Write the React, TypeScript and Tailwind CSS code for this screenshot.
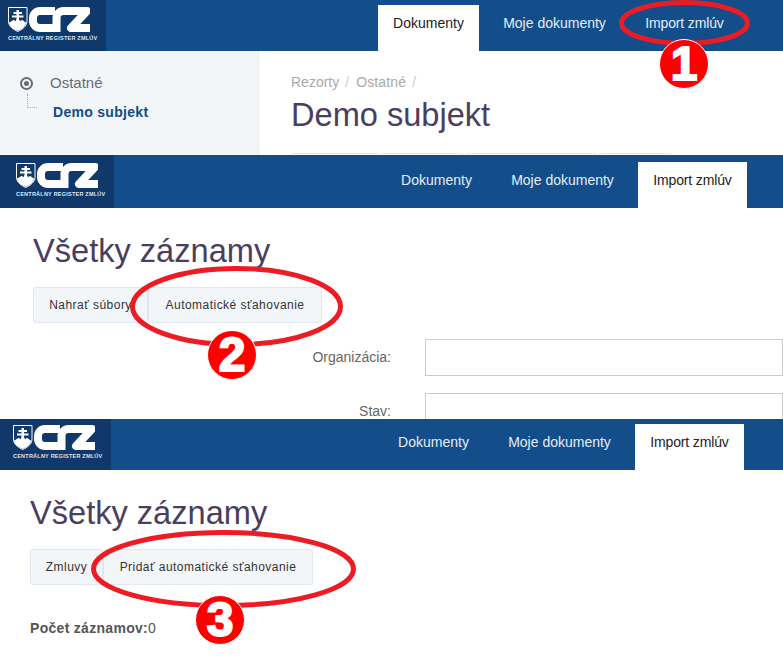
import type { ReactNode } from "react";

const sans = "font-['Liberation_Sans',Arial,sans-serif]";

// CRZ mark: state shield plus the stylised letters
function Logo() {
  return (
    <div className="flex w-[82px] flex-col">
      <svg width="82" height="25" viewBox="0 0 82 25" className="block">
        <path d="M.5.5h18.5v13.5c0 5.500-5 8.500-9.250 10.500C5.500 22.500.5 19.500.5 14z" fill="#0f3a6b" stroke="#fff" strokeWidth="1" />
        <path d="M1 15.500c2 0 3-2.500 4.500-2.500 1 0 1.500 1 2 1.500.5-2 1-2.500 2.250-2.500s1.750.5 2.250 2.500c.5-.5 1-1.500 2-1.500 1.500 0 2.500 2.500 4 2.500 0 4-5 7-8.250 8.500C6 22.500 1 19.500 1 15.500z" fill="#fff" />
        <path d="M8.500 3h2.500v2h3v2h-3v1.500h4.500v2H11V13H8.500v-2.500H4v-2h4.500V7h-3V5h3z" fill="#fff" />
        <path d="M47 4H32a7 7 0 0 0-7 7v3a7 7 0 0 0 7 7h15" fill="none" stroke="#fff" strokeWidth="8" />
        <path d="M48.500 25V11a7 7 0 0 1 7-7h3" fill="none" stroke="#fff" strokeWidth="8" />
        <path d="M57 4h22L63 21h19" fill="none" stroke="#fff" strokeWidth="8" strokeLinejoin="round" />
      </svg>
      <span className="mt-[2px] whitespace-nowrap text-[5.500px] leading-[9px] font-bold tracking-[.23px] text-[#dfe6ef]">CENTRÁLNY REGISTER ZMLÚV</span>
    </div>
  );
}

const tabs = [
  { label: "Dokumenty", w: "w-[101px]" },
  { label: "Moje dokumenty", w: "w-[135px]" },
  { label: "Import zmlúv", w: "w-[109px] tracking-[-.15px]" },
];

function Header({ active, box, h }: { active: number; box: string; h: string }) {
  return (
    <div className={`flex ${h} bg-[#144e8a]`}>
      <div className={`${box} shrink-0 bg-[#10386a]`}>
        <Logo />
      </div>
      <div className="ml-[272px] flex items-end gap-[8px]">
        {tabs.map((t, i) => (
          <div key={t.label} className={`flex h-[46px] items-center justify-center pb-[10px] text-[14px] ${t.w} ${i === active ? "bg-white text-[#222]" : "text-[#e3edf7]"}`}>
            {t.label}
          </div>
        ))}
      </div>
    </div>
  );
}

function Ring({ className, w, h }: { className: string; w: number; h: number }) {
  return (
    <svg width={w} height={h} viewBox={`0 0 ${w} ${h}`} className={`absolute ${className}`}>
      <ellipse cx={w / 2} cy={h / 2} rx={w / 2 - 2.500} ry={h / 2 - 2.500} fill="none" stroke="#ed1c24" strokeWidth="5" />
    </svg>
  );
}

function Badge({ n, className }: { n: string; className: string }) {
  return (
    <div className={`absolute flex h-[50px] w-[50px] items-center justify-center rounded-full border border-white bg-[#f00] text-[48px] leading-none font-bold text-white [-webkit-text-stroke:2px_white] ${className}`}>
      {n}
    </div>
  );
}

function Btn({ children, className = "" }: { children: ReactNode; className?: string }) {
  return (
    <div className={`flex h-[36px] items-center justify-center rounded-[3px] border border-[#e0e7f0] bg-[#f3f6f9] text-[12px] tracking-[.47px] text-[#333] ${className}`}>
      {children}
    </div>
  );
}

const titleCls = "text-[32.600px] leading-[40px] text-[#4a3e5e]";

export default function App() {
  return (
    <div className={`h-[660px] w-[783px] overflow-hidden bg-white ${sans}`}>
      {/* step 1 */}
      <section className="relative h-[155px] overflow-hidden">
        <Header active={0} box="w-[106px] pl-[8px] pt-[7px]" h="h-[51px]" />
        <div className="flex h-[104px]">
          <div className="relative w-[259px] shrink-0 border-r border-[#e8edf2] bg-[#f3f6f9] pl-[20px] pt-[22px]">
            <div className="flex items-center text-[15px] leading-[20px] text-[#6b6b78]">
              <span className="flex h-[13px] w-[13px] items-center justify-center rounded-full border-2 border-[#6d6a78]">
                <span className="h-[5px] w-[5px] rounded-full bg-[#6d6a78]" />
              </span>
              <span className="ml-[17px]">Ostatné</span>
            </div>
            <div className="flex">
              <div className="mt-[1px] ml-[7px] h-[14px] w-[10px] border-b border-l border-dotted border-[#aaa]" />
              <div className="ml-[16px] mt-[9px] text-[14px] leading-[20px] font-bold tracking-[.3px] text-[#134b87]">Demo subjekt</div>
            </div>
          </div>
          <div className="flex-1 pl-[32px] pt-[22px]">
            <div className="flex gap-[6px] text-[14px] leading-[18px] text-[#a9a9a9]">
              <span>Rezorty</span><span className="text-[#ccc]">/</span><span className="ml-[1px] tracking-[.15px]">Ostatné</span><span className="text-[#ccc]">/</span>
            </div>
            <div className={`${titleCls} mt-[4px]`}>Demo subjekt</div>
            <div className="mt-[18px] flex gap-[1px]">
              {[89, 83, 132, 75].map((w) => (
                <div key={w} style={{ width: w }} className="h-[3px] rounded-t-[3px] border border-b-0 border-[#e0e8f3]" />
              ))}
            </div>
          </div>
        </div>
        <Ring className="left-[619px] top-0" w={131} h={46} />
        <Badge n="1" className="left-[659px] top-[39px]" />
      </section>

      {/* step 2 */}
      <section className="relative h-[264px] overflow-hidden">
        <Header active={2} box="w-[114px] pl-[16px] pt-[8px]" h="h-[53px]" />
        <div className="pl-[33px] pt-[23px]">
          <div className={titleCls}>Všetky záznamy</div>
          <div className="mt-[16px] flex">
            <Btn className="w-[115px]">Nahrať súbory</Btn>
            <Btn className="w-[174px]">Automatické sťahovanie</Btn>
          </div>
          <div className="mt-[16px] flex items-center">
            <div className="w-[358px] text-right text-[14px] text-[#666]">Organizácia:</div>
            <div className="ml-[34px] h-[37px] flex-1 border border-[#ccc]" />
          </div>
          <div className="mt-[17px] flex">
            <div className="w-[358px] pt-[8px] text-right text-[14px] text-[#666]">Stav:</div>
            <div className="ml-[34px] h-[37px] flex-1 border border-[#ccc]" />
          </div>
        </div>
        <Ring className="left-[130px] top-[111px]" w={213} h={81} />
        <Badge n="2" className="left-[207px] top-[175px]" />
      </section>

      {/* step 3 */}
      <section className="relative h-[241px] overflow-hidden">
        <Header active={2} box="w-[111px] pl-[13px] pt-[6px]" h="h-[51px]" />
        <div className="pl-[30px] pt-[23px]">
          <div className={titleCls}>Všetky záznamy</div>
          <div className="mt-[16px] flex">
            <Btn className="w-[73px]">Zmluvy</Btn>
            <Btn className="w-[210px]">Pridať automatické sťahovanie</Btn>
          </div>
          <div className="mt-[34px] text-[14px] leading-[18px] tracking-[.3px] text-[#555]"><b>Počet záznamov:</b>0</div>
        </div>
        <Ring className="left-[91px] top-[111px]" w={265} h={78} />
        <Badge n="3" className="left-[195px] top-[176px]" />
      </section>
    </div>
  );
}
